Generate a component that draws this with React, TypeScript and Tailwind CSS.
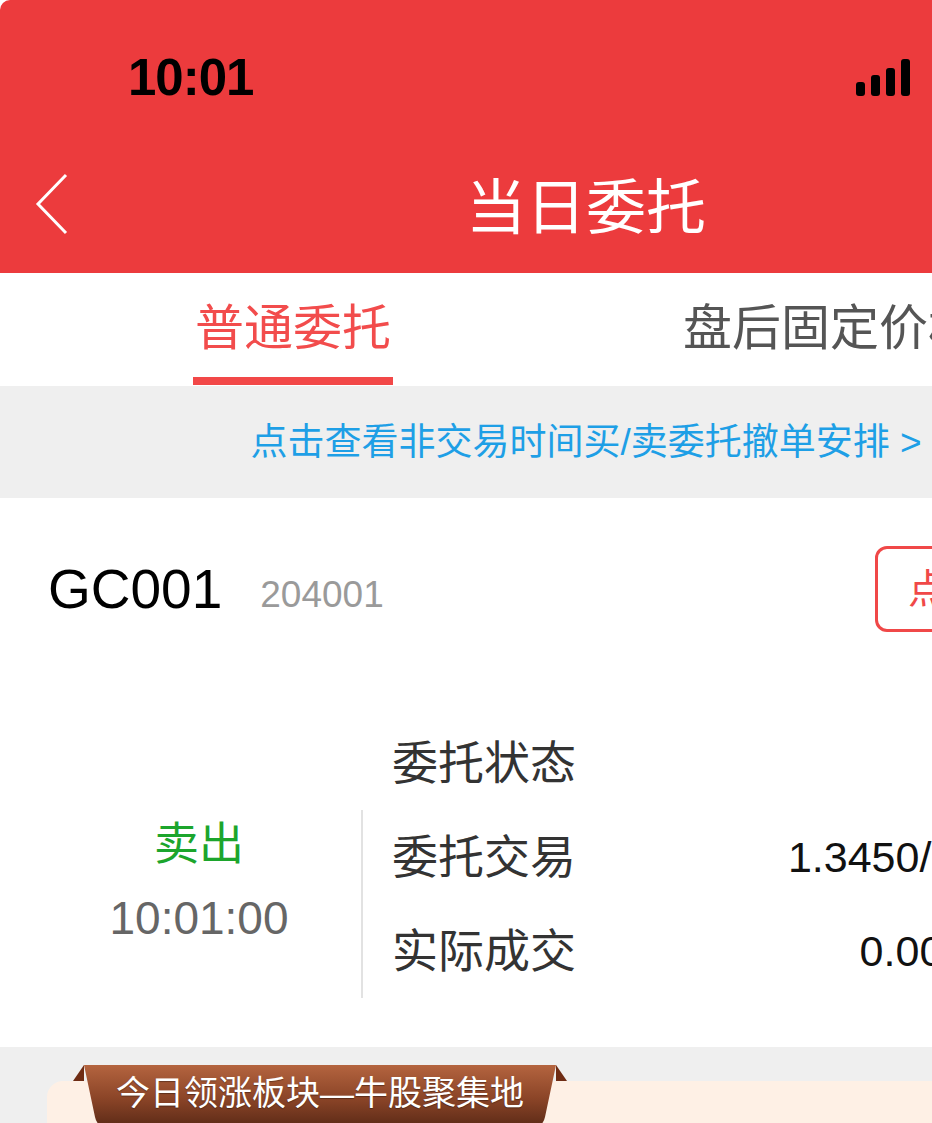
const SignalBars = () => (
  <div className="flex items-end gap-[6px] h-[37px]">
    <div className="w-[9px] h-[14px] rounded-[3px] bg-black" />
    <div className="w-[9px] h-[21px] rounded-[3px] bg-black" />
    <div className="w-[9px] h-[28px] rounded-[3px] bg-black" />
    <div className="w-[9px] h-[37px] rounded-[3px] bg-black" />
  </div>
);

const Ribbon = () => (
  <div className="relative w-[494px] h-[70px]">
    <svg className="absolute inset-0" width="494" height="70" viewBox="0 0 494 70">
      <defs>
        <linearGradient id="rb" x1="0" y1="0" x2="0" y2="1">
          <stop offset="0" stopColor="#b4643f" />
          <stop offset="0.55" stopColor="#8a4427" />
          <stop offset="1" stopColor="#5c2a17" />
        </linearGradient>
      </defs>
      <polygon points="0,16 11,0 11,16" fill="#6e2c14" />
      <polygon points="494,16 483,0 483,16" fill="#6e2c14" />
      <path d="M11 0 H483 L472 52 Q470 62 460 62 H34 Q24 62 22 52 Z" fill="url(#rb)" />
    </svg>
    <div className="absolute left-0 right-0 top-[8px] text-center text-[34px] leading-[40px] text-white [text-shadow:0_1px_1px_rgba(0,0,0,0.35)]">
      今日领涨板块—牛股聚集地
    </div>
  </div>
);

const DetailRow = ({ label, value }: { label: string; value: string }) => (
  <div className="h-[94px] flex items-center justify-between">
    <span className="text-[46px] leading-[60px] text-[#333333]">{label}</span>
    <span className="text-[43px] leading-[60px] text-[#111111]">{value}</span>
  </div>
);

export default function App() {
  return (
    <div
      className="w-[932px] h-[1123px] overflow-hidden bg-white"
      style={{ fontFamily: '"Liberation Sans", "Noto Sans CJK SC", sans-serif' }}
    >
      <div className="w-[1172px] flex flex-col">
        {/* header */}
        <div className="bg-[#ec3b3d] rounded-tl-[10px] h-[273px] flex flex-col">
          <div className="h-[154px] flex items-center">
            <span className="ml-[128px] text-[51px] font-bold tracking-[-1px] text-black leading-none">
              10:01
            </span>
            <div className="ml-[603px]">
              <SignalBars />
            </div>
          </div>
          <div className="h-[119px] pb-[10px] flex items-center relative">
            <svg className="absolute left-[34px] top-[19px]" width="36" height="62" viewBox="0 0 36 62">
              <polyline points="32,2 4,31 32,60" fill="none" stroke="white" strokeWidth="3" />
            </svg>
            <div className="flex-1 text-center text-white text-[60px] leading-[60px]">当日委托</div>
          </div>
        </div>

        {/* tabs */}
        <div className="h-[113px] flex bg-white">
          <div className="flex-1 flex flex-col items-center">
            <span className="pt-[31px] text-[49px] leading-[48px] text-[#f24c4c]">普通委托</span>
            <div className="mt-[25px] w-[200px] h-[8px] bg-[#f24848]" />
          </div>
          <div className="flex-1 flex flex-col items-center">
            <span className="pt-[31px] text-[49px] leading-[48px] text-[#555555] whitespace-nowrap">
              盘后固定价格委托
            </span>
          </div>
        </div>

        {/* notice */}
        <div className="h-[112px] bg-[#efefef] flex items-center justify-center">
          <span className="text-[37px] text-[#1e9fe6] leading-none">点击查看非交易时间买/卖委托撤单安排 &gt;</span>
        </div>

        {/* order card */}
        <div className="bg-white px-[48px] pt-[48px] pb-[49px]">
          <div className="h-[86px] flex items-center">
            <span className="text-[55px] leading-none text-black">GC001</span>
            <span className="ml-[38px] mt-[10px] text-[37px] leading-none text-[#9a9a9a]">204001</span>
            <button className="ml-auto mr-[23px] h-[86px] px-[30px] rounded-[12px] border-[3px] border-[#f04848] text-[40px] text-[#f04848] leading-none">
              点击撤单
            </button>
          </div>

          <div className="mt-[84px] flex flex-col pr-[97px]">
            <div className="pl-[344px]">
              <DetailRow label="委托状态" value="已报" />
            </div>
            <div className="flex">
              <div className="w-[302px] pt-[7px] flex flex-col items-center">
                <span className="text-[45px] leading-[56px] text-[#1ca52c]">卖出</span>
                <span className="mt-[17px] text-[46px] leading-[56px] text-[#666666]">10:01:00</span>
              </div>
              <div className="ml-[11px] w-[2px] bg-[#e2e2e2]" />
              <div className="ml-[29px] flex-1 flex flex-col">
                <DetailRow label="委托交易" value="1.3450/1000" />
                <DetailRow label="实际成交" value="0.00/100" />
              </div>
            </div>
          </div>
        </div>

        {/* promo */}
        <div className="bg-[#efefef] h-[200px] relative">
          <div className="absolute left-[47px] right-0 top-[34px] bottom-0 bg-[#fef0e5] rounded-tl-[16px]" />
          <div className="absolute left-[73px] top-[18px]">
            <Ribbon />
          </div>
        </div>
      </div>
    </div>
  );
}
